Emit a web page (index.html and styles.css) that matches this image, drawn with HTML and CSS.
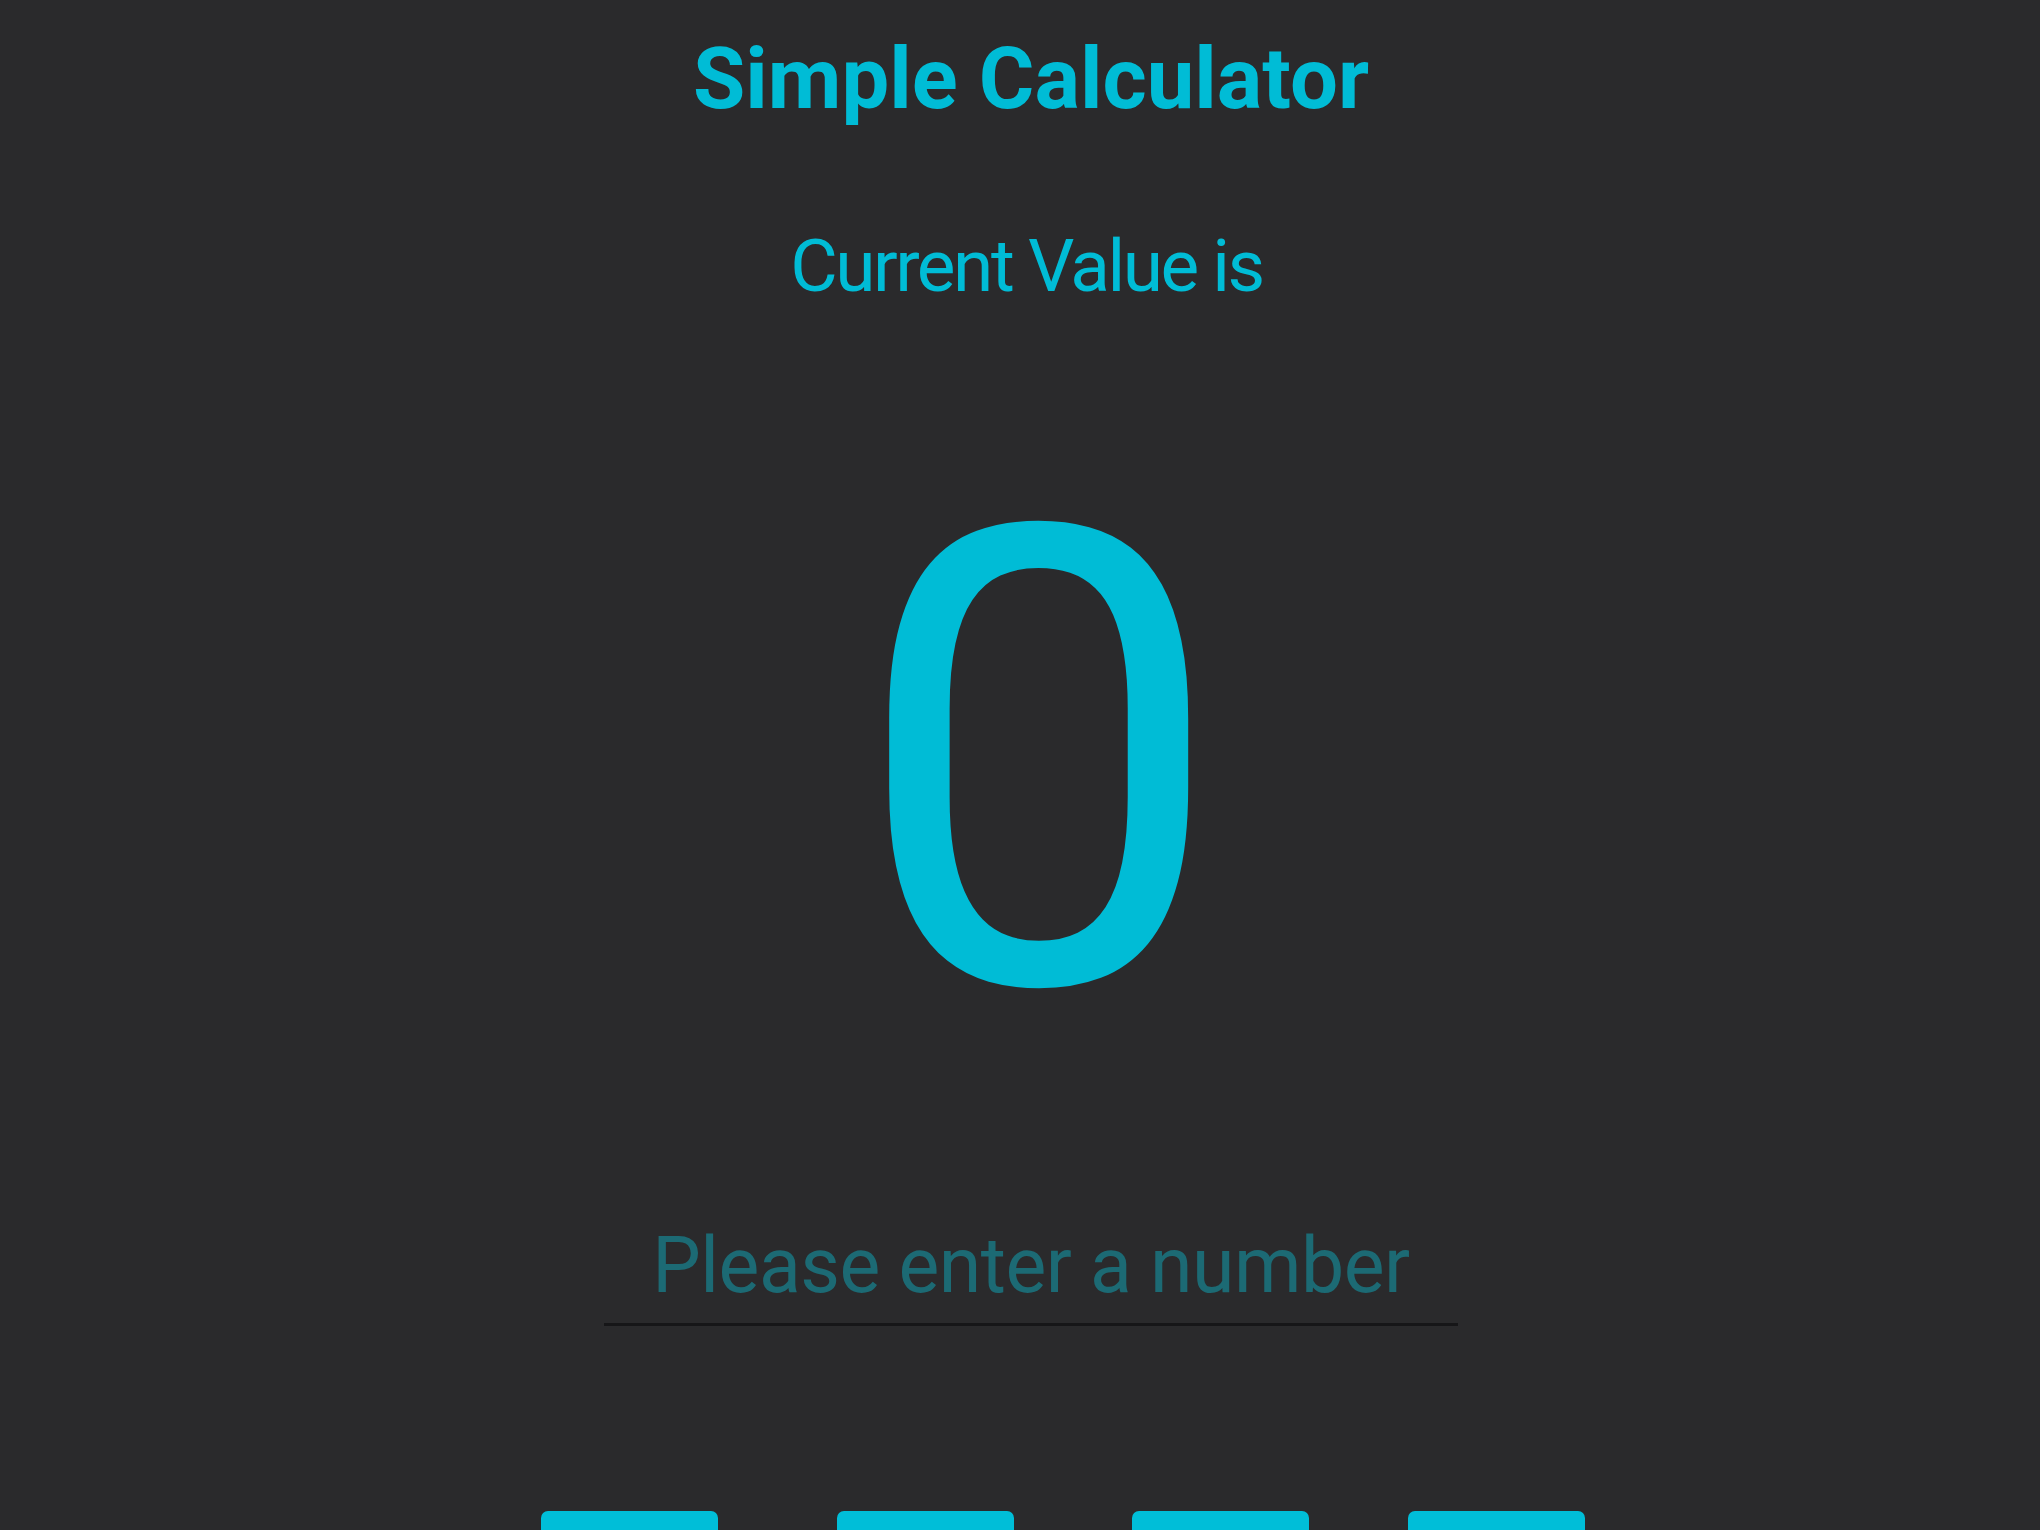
FILE: index.html
```html
<!DOCTYPE html>
<html lang="en">
<head>
<meta charset="utf-8">
<title>Simple Calculator</title>
<link rel="stylesheet" href="styles.css">
</head>
<body>
<main class="screen">
  <h1 class="title">Simple Calculator</h1>
  <p class="label">Current Value is</p>
  <div class="value">0</div>
  <input class="entry" type="text" placeholder="Please enter a number">
  <div class="keys">
    <button class="key key-a"></button>
    <button class="key key-b"></button>
    <button class="key key-c"></button>
    <button class="key key-d"></button>
  </div>
</main>
</body>
</html>
```

FILE: styles.css
```css
html, body {
  margin: 0;
  padding: 0;
  background: #2a2a2c;
  overflow: hidden;
}

.screen {
  height: 100vh;
  overflow: hidden;
  display: flex;
  flex-direction: column;
  align-items: center;
  padding-left: 22px;
  box-sizing: border-box;
  font-family: Roboto, "Liberation Sans", sans-serif;
  color: #00bcd6;
}

.title {
  margin: 37px 0 0 0;
  font-size: 85px;
  line-height: 1;
  font-weight: 700;
  height: 85px;
}

.label {
  margin: 108px 9px 0 0;
  font-size: 73px;
  line-height: 1;
  font-weight: 400;
  height: 73px;
  letter-spacing: -2.5px;
}

.value {
  margin-top: 140px;
  margin-left: 16px;
  font-size: 640px;
  line-height: 1;
  height: 640px;
  font-weight: 400;
  transform: scaleX(1.04);
}

.entry {
  margin-top: 144px;
  width: 854px;
  box-sizing: border-box;
  height: 99px;
  padding: 0 0 19px 0;
  border: none;
  border-bottom: 3px solid #161618;
  background: transparent;
  font-family: Roboto, "Liberation Sans", sans-serif;
  font-size: 77px;
  line-height: 1;
  letter-spacing: -0.5px;
  text-align: center;
  color: #00bcd6;
  outline: none;
}

.entry::placeholder {
  color: #1c6a74;
  opacity: 1;
}

.keys {
  align-self: flex-start;
  margin-left: 519px;
  margin-top: 185px;
  display: flex;
}

.key {
  width: 177px;
  height: 100px;
  border: none;
  border-radius: 7px;
  background: #00bed8;
  padding: 0;
}

.key-b { margin-left: 119px; }
.key-c { margin-left: 118px; }
.key-d { margin-left: 99px; }
```
